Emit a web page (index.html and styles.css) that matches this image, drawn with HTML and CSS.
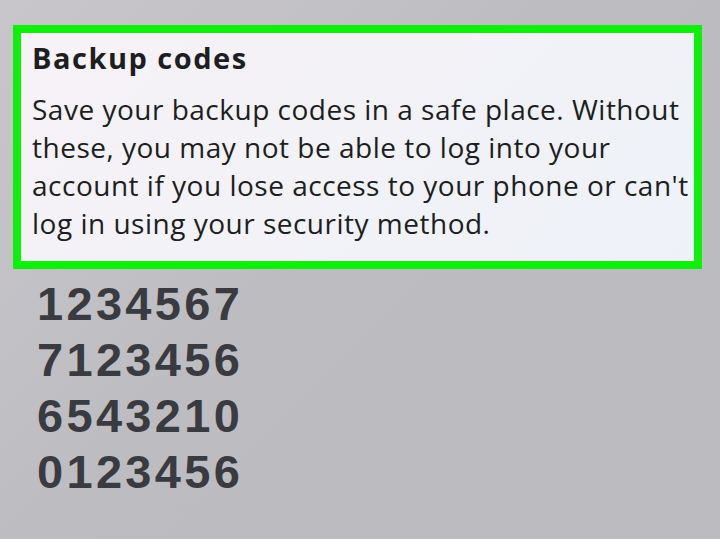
FILE: index.html
```html
<!DOCTYPE html>
<html>
<head>
<meta charset="utf-8">
<link rel="stylesheet" href="styles.css">
</head>
<body>
<main class="screen">
  <section class="notice">
    <h1 class="notice-title">Backup codes</h1>
    <p class="notice-text">Save your backup codes in a safe place. Without<br>these, you may not be able to log into your<br>account if you lose access to your phone or can't<br>log in using your security method.</p>
  </section>
  <ul class="codes">
    <li>1234567</li>
    <li>7123456</li>
    <li>6543210</li>
    <li>0123456</li>
  </ul>
</main>
</body>
</html>
```
FILE: styles.css
```css
html, body {
  margin: 0;
  padding: 0;
}
body {
  width: 720px;
  height: 539px;
  overflow: hidden;
  background: linear-gradient(135deg, #c9c6cb 0%, #bdbdc1 45%, #bcbcc0 100%);
  font-family: "Open Sans", "Liberation Sans", sans-serif;
}
.screen {
  display: flex;
  flex-direction: column;
  padding: 25px 0 0 13px;
}
.notice {
  box-sizing: border-box;
  width: 689px;
  height: 244px;
  border: 8px solid #0ef00a;
  background: linear-gradient(135deg, #f7f2f7 0%, #f2f2f7 50%, #eef2f8 100%);
  padding: 8px 0 0 11px;
  color: #1c1e22;
  white-space: nowrap;
}
.notice-title {
  margin: 0;
  font-size: 29px;
  line-height: 34px;
  font-weight: 700;
  letter-spacing: 1.5px;
}
.notice-text {
  margin: 15px 0 0;
  font-size: 28px;
  line-height: 38px;
  font-weight: 400;
  letter-spacing: 0.5px;
}
.codes {
  list-style: none;
  margin: 7px 0 0;
  padding: 0 0 0 24px;
  font-family: "Liberation Sans", Arial, sans-serif;
  font-weight: 700;
  font-size: 47px;
  line-height: 56px;
  letter-spacing: 3.3px;
  color: #3a3b40;
}
```
